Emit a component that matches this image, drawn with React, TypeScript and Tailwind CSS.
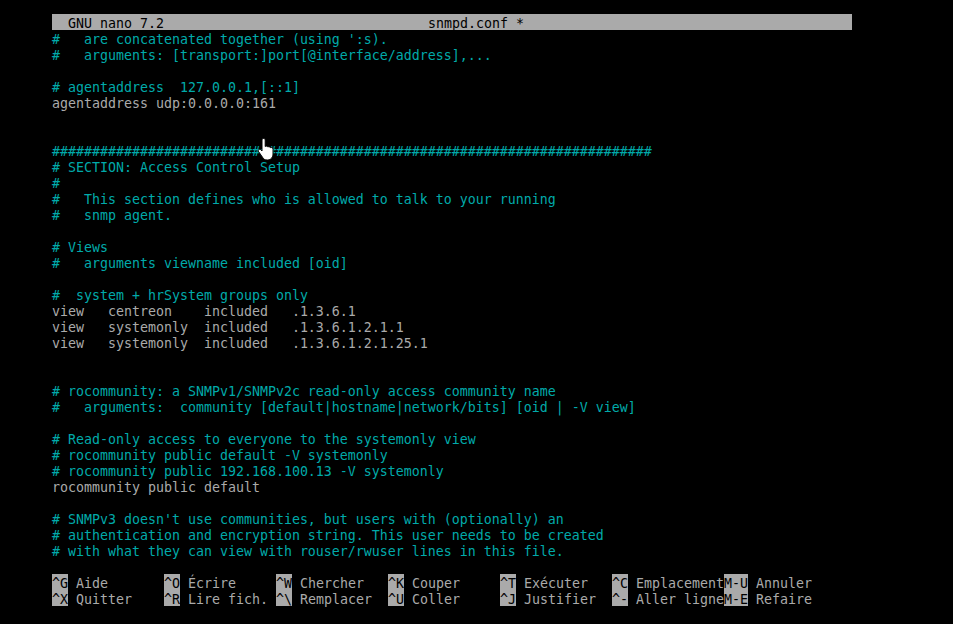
const hashes = "#".repeat(75);

// white = uncommented config line
const lines: { text: string; white?: boolean }[] = [
  { text: "#   are concatenated together (using ':s)." },
  { text: "#   arguments: [transport:]port[@interface/address],..." },
  { text: "" },
  { text: "# agentaddress  127.0.0.1,[::1]" },
  { text: "agentaddress udp:0.0.0.0:161", white: true },
  { text: "" },
  { text: "" },
  { text: hashes },
  { text: "# SECTION: Access Control Setup" },
  { text: "#" },
  { text: "#   This section defines who is allowed to talk to your running" },
  { text: "#   snmp agent." },
  { text: "" },
  { text: "# Views" },
  { text: "#   arguments viewname included [oid]" },
  { text: "" },
  { text: "#  system + hrSystem groups only" },
  { text: "view   centreon    included   .1.3.6.1", white: true },
  { text: "view   systemonly  included   .1.3.6.1.2.1.1", white: true },
  { text: "view   systemonly  included   .1.3.6.1.2.1.25.1", white: true },
  { text: "" },
  { text: "" },
  { text: "# rocommunity: a SNMPv1/SNMPv2c read-only access community name" },
  { text: "#   arguments:  community [default|hostname|network/bits] [oid | -V view]" },
  { text: "" },
  { text: "# Read-only access to everyone to the systemonly view" },
  { text: "# rocommunity public default -V systemonly" },
  { text: "# rocommunity public 192.168.100.13 -V systemonly" },
  { text: "rocommunity public default", white: true },
  { text: "" },
  { text: "# SNMPv3 doesn't use communities, but users with (optionally) an" },
  { text: "# authentication and encryption string. This user needs to be created" },
  { text: "# with what they can view with rouser/rwuser lines in this file." },
  { text: "" },
];

const shortcuts = [
  ["^G", "Aide", "^X", "Quitter"],
  ["^O", "Écrire", "^R", "Lire fich."],
  ["^W", "Chercher", "^\\", "Remplacer"],
  ["^K", "Couper", "^U", "Coller"],
  ["^T", "Exécuter", "^J", "Justifier"],
  ["^C", "Emplacement", "^-", "Aller ligne"],
  ["M-U", "Annuler", "M-E", "Refaire"],
];

function Shortcut({ keyName, label }: { keyName: string; label: string }) {
  return (
    <div className="flex h-4 whitespace-pre">
      <span className="h-4 bg-[#aaaaaa] text-black">{keyName}</span>
      <span className="ml-2">{label}</span>
    </div>
  );
}

export default function App() {
  return (
    <div className="relative w-[953px] h-[624px] overflow-hidden bg-black pt-[14px] pl-[52px] font-['DejaVu_Sans_Mono',monospace] text-[13.29px] leading-5 text-[#aaaaaa]">
      {/* Title bar */}
      <div className="flex w-[800px] h-4 bg-[#aaaaaa] text-black whitespace-pre">
        <span className="w-[376px] pl-4">GNU nano 7.2</span>
        <span>snmpd.conf *</span>
      </div>

      {/* Buffer */}
      <div className="text-[#00aaaa]">
        {lines.map((line, i) => (
          <div key={i} className={`h-4 whitespace-pre ${line.white ? "text-[#aaaaaa]" : ""}`}>
            {line.text}
          </div>
        ))}
      </div>

      {/* Shortcut list */}
      <div className="flex">
        {shortcuts.map(([k1, l1, k2, l2]) => (
          <div key={k1} className="w-28 shrink-0">
            <Shortcut keyName={k1} label={l1} />
            <Shortcut keyName={k2} label={l2} />
          </div>
        ))}
      </div>

      {/* Mouse pointer */}
      <svg
        className="absolute left-[257px] top-[137px]"
        width="19"
        height="25"
        viewBox="0 0 19 25"
      >
        <path
          d="M5 3c0-2 3.2-2 3.2 0v6.5c1-.7 2.2-.4 2.6.5 1-.6 2.2-.3 2.6.7 1-.5 2.6 0 2.6 1.5V17c0 3-2 6-5.5 6H10c-2.2 0-3.4-1-4.3-2.5L1.5 14.5c-1-1.6 1-3 2.3-1.8L5 14z"
          fill="#ffffff"
          stroke="#000000"
          strokeWidth="1"
        />
      </svg>
    </div>
  );
}
